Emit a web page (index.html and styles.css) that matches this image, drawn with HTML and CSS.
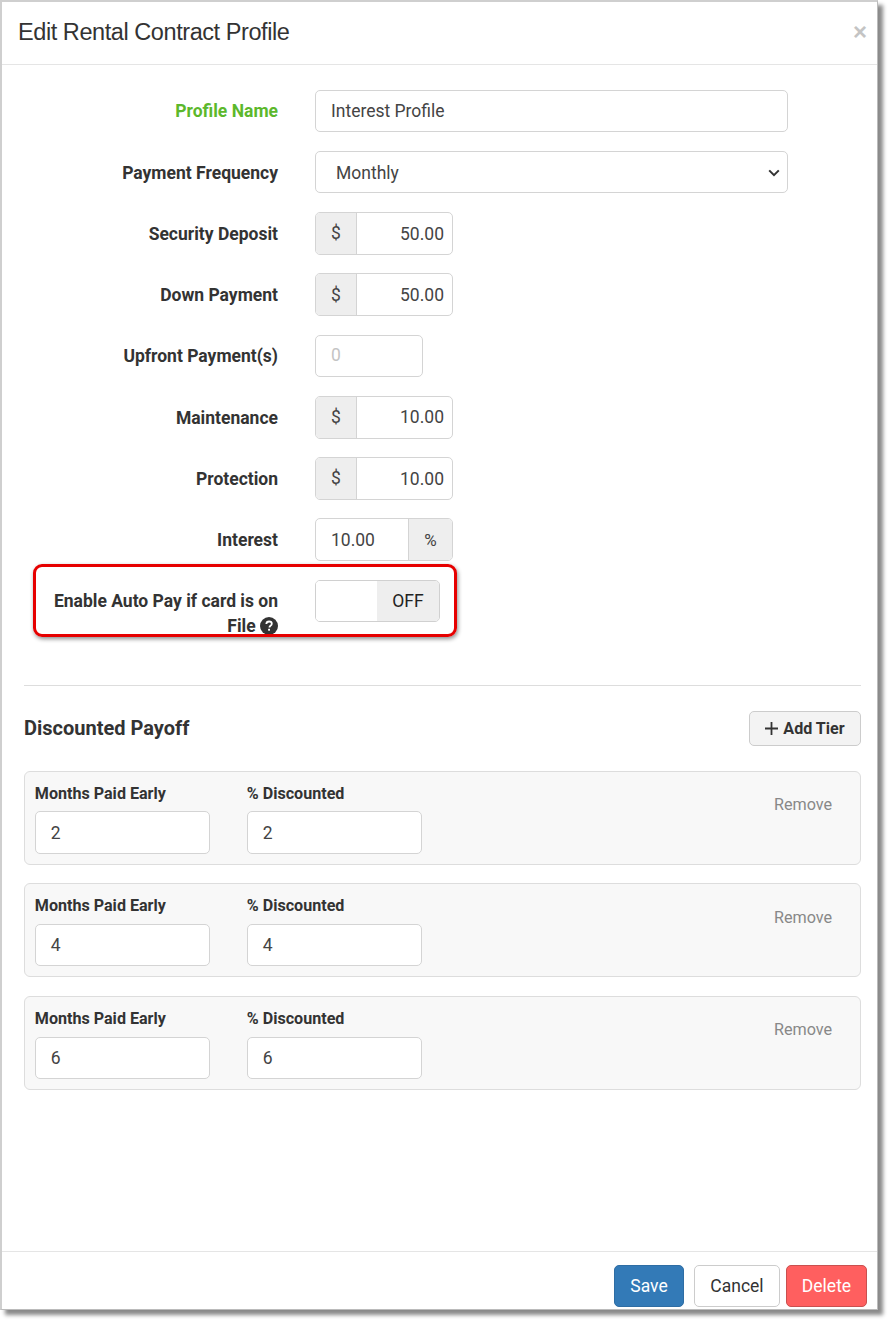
FILE: index.html
```html
<!DOCTYPE html>
<html lang="en">
<head>
<meta charset="utf-8">
<title>Edit Rental Contract Profile</title>
<link rel="stylesheet" href="styles.css">
</head>
<body>
<div class="modal">
  <header class="modal-header">
    <h1>Edit Rental Contract Profile</h1>
    <span class="close">×</span>
  </header>
  <main class="modal-body">
    <form class="form">
      <div class="row">
        <label class="lbl lbl-green">Profile Name</label>
        <div class="control wide">Interest Profile</div>
      </div>
      <div class="row">
        <label class="lbl">Payment Frequency</label>
        <div class="control wide select">
          <span>Monthly</span>
          <svg class="chev" width="12" height="8" viewBox="0 0 12 8"><path d="M1.2 1.4 6 6.2l4.8-4.8" fill="none" stroke="#333" stroke-width="2"/></svg>
        </div>
      </div>
      <div class="row">
        <label class="lbl">Security Deposit</label>
        <div class="group money"><span class="addon addon-l">$</span><span class="field right">50.00</span></div>
      </div>
      <div class="row">
        <label class="lbl">Down Payment</label>
        <div class="group money"><span class="addon addon-l">$</span><span class="field right">50.00</span></div>
      </div>
      <div class="row">
        <label class="lbl">Upfront Payment(s)</label>
        <div class="control small placeholder">0</div>
      </div>
      <div class="row">
        <label class="lbl">Maintenance</label>
        <div class="group money"><span class="addon addon-l">$</span><span class="field right">10.00</span></div>
      </div>
      <div class="row">
        <label class="lbl">Protection</label>
        <div class="group money"><span class="addon addon-l">$</span><span class="field right">10.00</span></div>
      </div>
      <div class="row">
        <label class="lbl">Interest</label>
        <div class="group money"><span class="field">10.00</span><span class="addon addon-r">%</span></div>
      </div>
      <div class="row row-top">
        <label class="lbl lbl-wrap">Enable Auto Pay if card is on File
          <svg class="help" width="18" height="18" viewBox="0 0 18 18"><circle cx="9" cy="9" r="9" fill="#333"/><path d="M6.3 7c.1-1.6 1.2-2.5 2.8-2.5s2.7.9 2.7 2.2c0 1-.5 1.500-1.300 2-.7.500-1 .8-1 1.500v.3" fill="none" stroke="#fff" stroke-width="1.800"/><rect x="8.100" y="11.800" width="1.900" height="1.900" fill="#fff"/></svg>
        </label>
        <div class="toggle"><span class="toggle-on"></span><span class="toggle-off">OFF</span></div>
        <div class="highlight"></div>
      </div>
    </form>

    <hr class="divider">

    <div class="section-head">
      <h2>Discounted Payoff</h2>
      <button type="button" class="btn-add"><svg width="13" height="13" viewBox="0 0 13 13"><path d="M6.500 0v13M0 6.500h13" stroke="#333" stroke-width="1.800"/></svg>Add Tier</button>
    </div>

    <div class="tiers">
      <div class="tier">
        <div class="tier-col"><label>Months Paid Early</label><div class="control tier-input">2</div></div>
        <div class="tier-col"><label>% Discounted</label><div class="control tier-input">2</div></div>
        <a class="remove">Remove</a>
      </div>
      <div class="tier">
        <div class="tier-col"><label>Months Paid Early</label><div class="control tier-input">4</div></div>
        <div class="tier-col"><label>% Discounted</label><div class="control tier-input">4</div></div>
        <a class="remove">Remove</a>
      </div>
      <div class="tier">
        <div class="tier-col"><label>Months Paid Early</label><div class="control tier-input">6</div></div>
        <div class="tier-col"><label>% Discounted</label><div class="control tier-input">6</div></div>
        <a class="remove">Remove</a>
      </div>
    </div>
  </main>
  <footer class="modal-footer">
    <button type="button" class="btn btn-save">Save</button>
    <button type="button" class="btn btn-cancel">Cancel</button>
    <button type="button" class="btn btn-delete">Delete</button>
  </footer>
</div>
</body>
</html>
```
FILE: styles.css
```css
* { box-sizing: border-box; }
html, body { margin: 0; padding: 0; background: #fff; }
body {
  width: 894px;
  height: 1327px;
  overflow: hidden;
  font-family: Roboto, "Liberation Sans", sans-serif;
  color: #333;
  font-size: 17.5px;
}
.modal {
  width: 878px;
  height: 1310px;
  background: #fff;
  border: 2px solid #cfcfcf;
  border-right: 1px solid #bbb;
  border-bottom: 1px solid #bbb;
  box-shadow: 5px 5px 4px #8a8a8a;
  display: flex;
  flex-direction: column;
}
.modal-header {
  height: 63px;
  flex: none;
  border-bottom: 1px solid #e5e5e5;
  display: flex;
  align-items: center;
  justify-content: space-between;
  padding: 0 10px 2px 16px;
}
.modal-header h1 {
  margin: 0;
  font-family: "Liberation Sans", Arial, sans-serif;
  font-weight: 400;
  font-size: 23.5px;
  letter-spacing: -0.43px;
  color: #333;
}
.close { font-family: "Liberation Sans", sans-serif; font-weight: 700; font-size: 24px; color: #c4c4c4; line-height: 1; }
.modal-body { flex: 1; padding: 25px 16px 0 22px; }
.form { display: flex; flex-direction: column; gap: 19.22px; }
.row { display: flex; align-items: center; height: 42px; position: relative; }
.row-top { height: 42px; align-items: flex-start; }
.lbl {
  width: 254px;
  flex: none;
  text-align: right;
  font-weight: 700;
  font-size: 17.5px;
  margin-right: 37px;
  line-height: 25px;
  padding-top: 1.9px;
  color: #333;
}
.lbl-green { color: #5cb82c; }
.lbl-wrap { padding-top: 9px; padding-left: 5px; }
.help { vertical-align: -3px; }
.control {
  height: 42px;
  border: 1px solid #d4d4d4;
  border-radius: 5px;
  background: #fff;
  display: flex;
  align-items: center;
  padding: 0 15px 1px;
  font-size: 17.5px;
  color: #444;
}
.wide { width: 473px; }
.select { justify-content: space-between; padding: 1px 7px 0 20px; }
.small { width: 108px; }
.placeholder { color: #c4c4c4; }
.group {
  display: flex;
  height: 43px;
  border: 1px solid #d4d4d4;
  border-radius: 5px;
  overflow: hidden;
}
.money { width: 138px; }
.addon {
  background: #eee;
  display: flex;
  align-items: center;
  justify-content: center;
  flex: none;
  color: #444;
}
.addon-l { width: 41px; border-right: 1px solid #d4d4d4; }
.addon-r { width: 44px; border-left: 1px solid #d4d4d4; font-size: 17px; }
.field { flex: 1; display: flex; align-items: center; padding: 0.6px 8px 0 15px; color: #444; }
.right { justify-content: flex-end; }
.toggle {
  width: 125px;
  height: 42px;
  border: 1px solid #d0d0d0;
  border-radius: 5px;
  overflow: hidden;
  display: flex;
}
.toggle-on { width: 61px; background: #fff; }
.toggle-off { flex: 1; background: #eee; display: flex; align-items: center; justify-content: center; font-size: 17.5px; color: #222; }
.highlight {
  position: absolute;
  left: 9px;
  top: -16px;
  width: 424px;
  height: 73px;
  border: 3px solid #e60000;
  border-radius: 9px;
  box-shadow: 1px 2px 4px rgba(0,0,0,.45);
  pointer-events: none;
}
.divider { border: 0; border-top: 1px solid #ddd; margin: 63px 0 0 0; height: 0; }
.section-head { display: flex; justify-content: space-between; align-items: center; margin-top: 25px; height: 35px; }
.section-head h2 { margin: 0; font-size: 20px; font-weight: 700; color: #333; }
.btn-add {
  width: 112px;
  height: 35px;
  border: 1px solid #ccc;
  border-radius: 5px;
  background: #f3f3f3;
  font: 700 16.1px Roboto, sans-serif;
  color: #333;
  display: flex;
  align-items: center;
  justify-content: center;
  gap: 5px;
  padding: 0;
}
.tiers { display: flex; flex-direction: column; gap: 18.6px; margin-top: 24.84px; }
.tier {
  height: 94px;
  background: #f8f8f8;
  border: 1px solid #ddd;
  border-radius: 6px;
  display: flex;
  padding: 12px 9.8px 0;
  gap: 37px;
  position: relative;
}
.tier-col { width: 175px; display: flex; flex-direction: column; }
.tier-col label { font-weight: 700; font-size: 16.1px; line-height: 19px; margin-bottom: 8.8px; color: #333; }
.tier-input { height: 42.4px; width: 175px; padding: 0 15px; }
.remove { position: absolute; left: 749px; top: 23.5px; font-size: 16.2px; line-height: 19px; color: #888; }
.modal-footer {
  height: 58px;
  flex: none;
  border-top: 1px solid #e5e5e5;
  display: flex;
  justify-content: flex-end;
  align-items: flex-start;
  padding: 13px 10px 0 0;
}
.btn {
  height: 42px;
  border-radius: 5px;
  font: 400 17.5px Roboto, sans-serif;
  padding: 0;
}
.btn-save { width: 70px; background: #337ab7; border: 1px solid #2e6da4; color: #fff; margin-right: 10px; }
.btn-cancel { width: 86px; background: #fff; border: 1px solid #ccc; color: #333; margin-right: 6px; }
.btn-delete { width: 81px; background: #ff5f5f; border: 1px solid #c9504f; color: #fff; }
```
